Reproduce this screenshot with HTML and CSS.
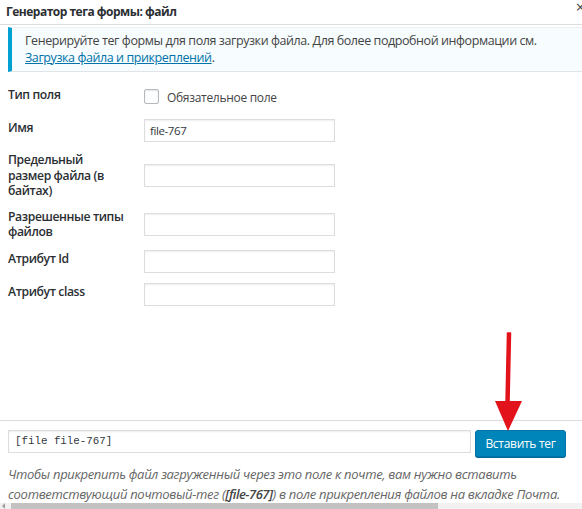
FILE: index.html
```html
<!DOCTYPE html>
<html lang="ru">
<head>
<meta charset="utf-8">
<title>Генератор тега формы: файл</title>
<link rel="stylesheet" href="styles.css">
</head>
<body>
<div class="dialog">
  <header class="title-bar">
    <h1 class="title">Генератор тега формы: файл</h1>
    <span class="close">×</span>
  </header>
  <div class="notice">
    <p>Генерируйте тег формы для поля загрузки файла. Для более подробной информации см.<br><a href="#">Загрузка файла и прикреплений</a>.</p>
  </div>
  <div class="form">
    <div class="label single">Тип поля</div>
    <div class="field"><label class="check"><span class="box"></span>Обязательное поле</label></div>

    <div class="label single">Имя</div>
    <div class="field"><div class="input">file-767</div></div>

    <div class="label">Предельный<br>размер файла (в<br>байтах)</div>
    <div class="field"><div class="input"></div></div>

    <div class="label">Разрешенные типы<br>файлов</div>
    <div class="field"><div class="input"></div></div>

    <div class="label single">Атрибут Id</div>
    <div class="field"><div class="input"></div></div>

    <div class="label single">Атрибут class</div>
    <div class="field"><div class="input"></div></div>
  </div>
  <div class="insert-box">
    <div class="insert-row">
      <div class="tag-input">[file file-767]</div>
      <button class="btn">Вставить тег</button>
    </div>
    <p class="desc">Чтобы прикрепить файл загруженный через это поле к почте, вам нужно вставить соответствующий почтовый-тег (<b>[file-767]</b>) в поле прикрепления файлов на вкладке Почта.</p>
  </div>
  <div class="hscroll"><span class="arrow"></span><span class="thumb"></span></div>
  <svg class="pointer" width="40" height="104" viewBox="0 0 40 104">
    <path d="M18.5 2 L21.5 2 L20 72 L17 72 Z" fill="#e3131b" stroke="#e3131b" stroke-width="1.5" stroke-linejoin="round"/>
    <path d="M6 70 L33 70 L19 100 Z" fill="#e3131b"/>
  </svg>
</div>
</body>
</html>
```
FILE: styles.css
```css
* { box-sizing: border-box; }
html, body { margin: 0; padding: 0; background: #fff; }
body {
  font-family: "Open Sans", "Noto Sans", sans-serif;
  font-size: 13px;
  color: #32373c;
  width: 582px;
  height: 509px;
  overflow: hidden;
}
.dialog { position: relative; height: 509px; }
.title-bar {
  height: 25px;
  border-bottom: 1px solid #dcdcdc;
  display: flex;
  align-items: center;
  padding: 0 6px 2px;
}
.title {
  margin: 0;
  font-size: 12px;
  font-weight: 700;
  color: #2b2f33;
  letter-spacing: -0.5px;
  flex: 1;
}
.close { font-size: 16px; color: #444; margin-right: -9px; margin-top: -8px; }
.notice {
  margin: 2px 0 0 8px;
  border-left: 4px solid #00a0d2;
  border-bottom: 1px solid #e2e4e7;
  border-top: 1px solid #eef0f1;
  background: #f7fcfe;
  padding: 5px 12px 5px 13px;
}
.notice p { margin: 0; font-size: 12.5px; line-height: 16.5px; color: #444; letter-spacing: -0.42px; }
.notice a { color: #0073aa; }
.form {
  margin-top: 14px;
  padding-left: 8px;
  display: grid;
  grid-template-columns: 136px 191px;
  row-gap: 10px;
  align-items: center;
}
.label {
  font-size: 12.2px;
  font-weight: 600;
  color: #2b2f33;
  line-height: 15.5px;
  letter-spacing: -0.4px;
  min-height: 23px;
  display: flex;
  align-items: center;
}
.label.single { padding-bottom: 5px; }
.field { display: flex; align-items: center; min-height: 23px; }
.check { display: flex; align-items: center; color: #444; font-size: 12px; letter-spacing: -0.3px; }
.box {
  width: 15px; height: 15px;
  border: 1px solid #b4b9be;
  border-radius: 2px;
  box-shadow: inset 0 1px 2px rgba(0,0,0,.1);
  margin-right: 8px;
  margin-top: -2px;
  background: #fff;
}
.input {
  width: 191px;
  height: 23px;
  border: 1px solid #dddddd;
  box-shadow: inset 0 1px 2px rgba(0,0,0,.07);
  font-size: 11.5px;
  line-height: 21px;
  padding: 0 5px;
  color: #32373c;
  letter-spacing: -0.4px;
}
.insert-box {
  position: absolute;
  left: 0; right: 0; top: 420px;
  border-top: 1px solid #dcdcdc;
  padding: 9px 0 0 8px;
}
.insert-row { display: flex; align-items: flex-start; gap: 4px; }
.tag-input {
  width: 463px;
  height: 23px;
  border: 1px solid #dddddd;
  box-shadow: inset 0 1px 2px rgba(0,0,0,.07);
  font-family: "Liberation Mono", "DejaVu Sans Mono", monospace;
  font-size: 10.8px;
  line-height: 21px;
  padding: 0 6px;
  color: #32373c;
}
.btn {
  width: 91px;
  height: 27px;
  background: #0085ba;
  border: 1px solid #0073aa;
  border-radius: 3px;
  box-shadow: 0 1px 0 #006799;
  color: #fff;
  font-family: "Open Sans", "Noto Sans", sans-serif;
  font-size: 12px;
  letter-spacing: -0.3px;
  padding: 0;
}
.desc {
  margin: 7px 0 0;
  font-style: italic;
  color: #666;
  line-height: 20px;
  letter-spacing: -0.3px;
  width: 560px;
}
.desc b { font-weight: 600; color: #444; letter-spacing: -0.5px; }
.hscroll {
  position: absolute;
  left: 0; right: 0; bottom: 0;
  height: 6px;
  background: #f1f1f1;
  display: flex;
  align-items: center;
}
.arrow {
  width: 0; height: 0;
  margin: 0 6px 0 2px;
  border-top: 3px solid transparent;
  border-bottom: 3px solid transparent;
  border-right: 3px solid #a0a0a0;
}
.thumb { width: 427px; height: 6px; background: #c2c2c2; }
.pointer { position: absolute; left: 489px; top: 331px; }
```
